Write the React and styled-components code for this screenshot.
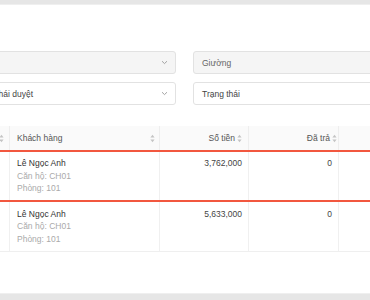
import React from "react";
import styled, { createGlobalStyle } from "styled-components";

const GlobalStyle = createGlobalStyle`
  html, body {
    margin: 0;
    padding: 0;
    background: #e6e6e6;
    overflow: hidden;
  }
  body {
    font-family: "Liberation Sans", Arial, sans-serif;
  }
`;

const Page = styled.div`
  width: 370px;
  height: 300px;
  padding-top: 4px;
  box-sizing: border-box;
  overflow: hidden;
`;

const Card = styled.div`
  height: 290px;
  box-sizing: border-box;
  background: #fff;
  border-top: 1px solid #efefef;
  border-bottom: 1px solid #efefef;
  padding-top: 46px;
  overflow: hidden;
`;

const Content = styled.div`
  margin-left: -37px;
  width: 600px;
`;

const Filters = styled.div`
  display: grid;
  grid-template-columns: 213px 219px;
  column-gap: 17px;
  row-gap: 8px;
`;

const Select = styled.div`
  height: 23px;
  box-sizing: border-box;
  border: 1px solid #e2e2e2;
  border-radius: 3px;
  background: ${(p) => (p.$disabled ? "#f5f5f5" : "#fff")};
  display: flex;
  align-items: center;
  justify-content: space-between;
  padding: 0 7px 0 8px;
  font-size: 8.5px;
  color: ${(p) => (p.$disabled ? "#666" : "#444")};
`;

const Table = styled.div`
  margin-top: 21px;
  font-size: 8.5px;
`;

const Row = styled.div`
  display: grid;
  grid-template-columns: 47px 150px 89px 90px 200px;
  border-bottom: 1px solid #efefef;
  background: ${(p) => (p.$head ? "#fafafa" : "#fff")};
  height: ${(p) => (p.$head ? "24px" : "auto")};
  position: relative;
  z-index: ${(p) => (p.$selected ? 1 : 0)};

  &::after {
    content: "";
    display: ${(p) => (p.$selected ? "block" : "none")};
    position: absolute;
    left: 0;
    right: 0;
    top: -1px;
    bottom: -1px;
    border-top: 2px solid #f2573f;
    border-bottom: 2px solid #f2573f;
    pointer-events: none;
  }
`;

const HeadCell = styled.div`
  border-right: 1px solid #eeeeee;
  display: flex;
  align-items: center;
  justify-content: ${(p) => p.$justify || "flex-start"};
  gap: 2px;
  padding: ${(p) => p.$pad || "0 6px"};
  color: #555;
`;

const Cell = styled.div`
  border-right: 1px solid #f0f0f0;
  padding: 6px 6px 6px ${(p) => (p.$first ? "7px" : "6px")};
  line-height: 12.5px;
  text-align: ${(p) => (p.$right ? "right" : "left")};
  color: #444;
  min-height: 37.5px;
`;

const Name = styled.div`
  color: #333;
`;

const Sub = styled.div`
  color: #aaa;
`;

const Chevron = () => (
  <svg width="7" height="5" viewBox="0 0 7 5">
    <path d="M1 1.2 L3.5 3.6 L6 1.2" fill="none" stroke="#9a9a9a" strokeWidth="0.9" />
  </svg>
);

const Sort = () => (
  <svg width="5" height="9" viewBox="0 0 5 9">
    <path d="M2.5 0.8 L4.6 3.4 L0.4 3.4 Z" fill="#c4c4c4" />
    <path d="M2.5 8.2 L4.6 5.6 L0.4 5.6 Z" fill="#c4c4c4" />
  </svg>
);

const rows = [
  { name: "Lê Ngọc Anh", apt: "CH01", room: "101", amount: "3,762,000", paid: "0" },
  { name: "Lê Ngọc Anh", apt: "CH01", room: "101", amount: "5,633,000", paid: "0" },
];

export default function App() {
  return (
    <>
      <GlobalStyle />
      <Page>
        <Card>
          <Content>
            <Filters>
              <Select $disabled>
                <span></span>
                <Chevron />
              </Select>
              <Select $disabled>
                <span>Giường</span>
              </Select>
              <Select>
                <span>Trạng thái duyệt</span>
                <Chevron />
              </Select>
              <Select>
                <span>Trạng thái</span>
              </Select>
            </Filters>

            <Table>
              <Row $head>
                <HeadCell $justify="flex-end" $pad="0 5px 0 0">
                  <Sort />
                </HeadCell>
                <HeadCell $justify="space-between" $pad="0 4px 0 7px">
                  <span>Khách hàng</span>
                  <Sort />
                </HeadCell>
                <HeadCell $justify="flex-end" $pad="0 6px 0 0">
                  <span>Số tiền</span>
                  <Sort />
                </HeadCell>
                <HeadCell $justify="flex-end" $pad="0 1px 0 0">
                  <span>Đã trả</span>
                  <Sort />
                </HeadCell>
                <HeadCell />
              </Row>
              {rows.map((r, i) => (
                <Row key={i} $selected={i === 0}>
                  <Cell />
                  <Cell $first>
                    <Name>{r.name}</Name>
                    <Sub>Căn hộ: {r.apt}</Sub>
                    <Sub>Phòng: {r.room}</Sub>
                  </Cell>
                  <Cell $right>{r.amount}</Cell>
                  <Cell $right>{r.paid}</Cell>
                  <Cell />
                </Row>
              ))}
            </Table>
          </Content>
        </Card>
      </Page>
    </>
  );
}
